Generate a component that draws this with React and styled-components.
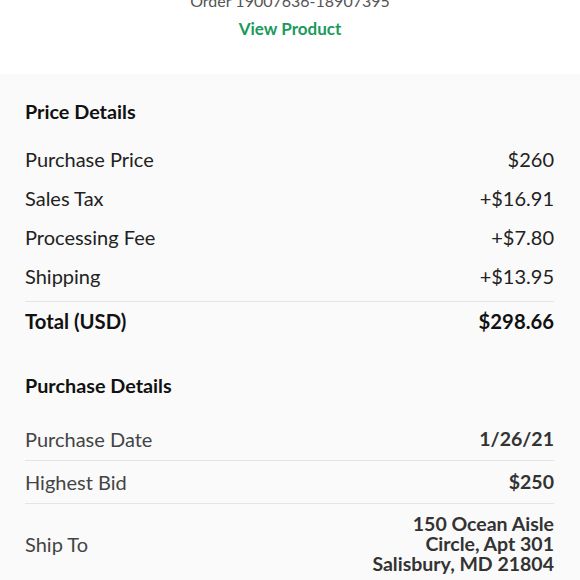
import React from "react";
import styled, { createGlobalStyle } from "styled-components";

const Global = createGlobalStyle`
  html, body { margin: 0; padding: 0; background: #fafafa; }
  body { font-family: Lato, "Noto Sans", Arial, sans-serif; -webkit-font-smoothing: antialiased; overflow: hidden; }
`;

const Page = styled.div`
  width: 580px;
  height: 580px;
  overflow: hidden;
  background: #fafafa;
`;

const Header = styled.header`
  background: #ffffff;
  height: 84px;
  margin-top: -10px;
  display: flex;
  flex-direction: column;
  align-items: center;
`;

const OrderLine = styled.div`
  font-size: 16px;
  line-height: 22px;
  color: #555;
`;

const ViewLink = styled.a`
  margin-top: 6px;
  font-size: 17px;
  line-height: 22px;
  font-weight: 700;
  color: #1a9a5c;
  text-decoration: none;
`;

const Section = styled.section`
  padding: ${(p) => p.$top || 0}px 26px 0 25px;
`;

const Heading = styled.h2`
  margin: 0 0 ${(p) => p.$after || 0}px 0;
  font-size: 19.8px;
  line-height: 36px;
  font-weight: 700;
  color: #111;
`;

const PriceRow = styled.div`
  display: flex;
  justify-content: space-between;
  align-items: center;
  height: ${(p) => (p.$total ? 38 : 39)}px;
  font-size: ${(p) => (p.$total ? 20.3 : 20)}px;
  font-weight: ${(p) => (p.$total ? 700 : 400)};
  color: ${(p) => (p.$total ? "#111" : "#222")};
  border-top: ${(p) => (p.$total ? "1px solid #e4e4e4" : "none")};
  margin-top: ${(p) => (p.$total ? 6 : 0)}px;
`;

const DetailRow = styled.div`
  display: flex;
  justify-content: space-between;
  align-items: center;
  padding: 10px 0;
  line-height: 22px;
  border-bottom: ${(p) => (p.$last ? "none" : "1px solid #e4e4e4")};
`;

const Label = styled.span`
  font-size: 20px;
  color: #444;
`;

const Value = styled.span`
  font-size: 19.5px;
  font-weight: 700;
  color: #333;
  text-align: right;
  line-height: 20px;
`;

const priceRows = [
  ["Purchase Price", "$260"],
  ["Sales Tax", "+$16.91"],
  ["Processing Fee", "+$7.80"],
  ["Shipping", "+$13.95"],
];

export default function App() {
  return (
    <Page>
      <Global />
      <Header>
        <OrderLine>Order 19007636-18907395</OrderLine>
        <ViewLink href="#">View Product</ViewLink>
      </Header>
      <Section $top={19}>
        <Heading $after={10}>Price Details</Heading>
        {priceRows.map(([l, v]) => (
          <PriceRow key={l}>
            <span>{l}</span>
            <span>{v}</span>
          </PriceRow>
        ))}
        <PriceRow $total>
          <span>Total (USD)</span>
          <span>$298.66</span>
        </PriceRow>
      </Section>
      <Section $top={27}>
        <Heading $after={15}>Purchase Details</Heading>
        <DetailRow>
          <Label>Purchase Date</Label>
          <Value>1/26/21</Value>
        </DetailRow>
        <DetailRow>
          <Label>Highest Bid</Label>
          <Value>$250</Value>
        </DetailRow>
        <DetailRow $last>
          <Label>Ship To</Label>
          <Value>
            150 Ocean Aisle
            <br />
            Circle, Apt 301
            <br />
            Salisbury, MD 21804
          </Value>
        </DetailRow>
      </Section>
    </Page>
  );
}
